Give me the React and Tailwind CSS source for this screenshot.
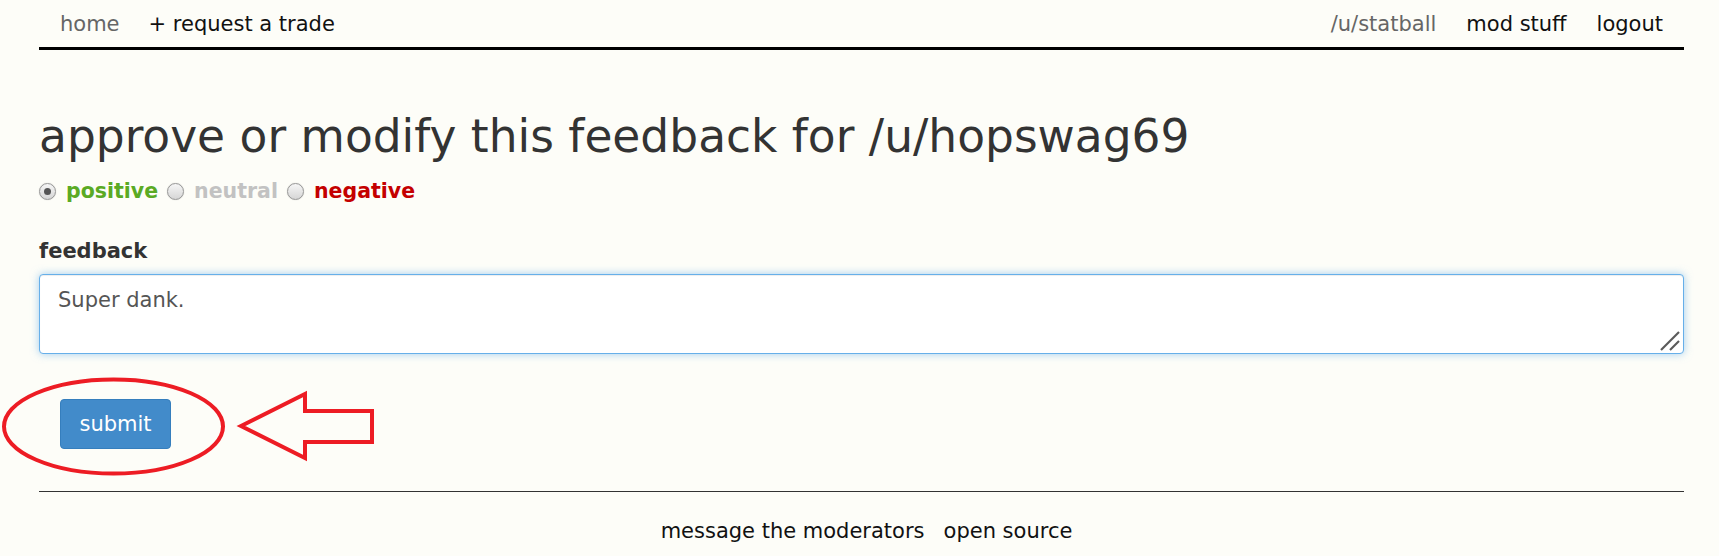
import React from "react";

function Radio({ checked }) {
  return (
    <span className="inline-flex items-center justify-center w-[17px] h-[17px] rounded-full border border-[#979797] bg-gradient-to-b from-[#f6f6f6] to-[#d6d6d6] shadow-[0_0_1px_rgba(0,0,0,0.25)] shrink-0">
      {checked && <span className="w-[7px] h-[7px] rounded-full bg-[#555]" />}
    </span>
  );
}

export default function App() {
  return (
    <div
      className="relative h-[556px] overflow-hidden bg-[#fdfdf8] text-[21px] leading-[30px] text-[#333]"
      style={{ fontFamily: '"DejaVu Sans", Verdana, sans-serif' }}
    >
      <div className="pl-[39px] pr-[35px]">
        <nav className="flex items-center justify-between h-[50px] border-b-[3px] border-black">
          <div className="flex items-center gap-[29px] pl-[21px]">
            <a className="text-[#666]">home</a>
            <a className="text-[#111]">+ request a trade</a>
          </div>
          <div className="flex items-center gap-[30px] pr-[21px]">
            <a className="text-[#666]">/u/statball</a>
            <a className="text-[#111]">mod stuff</a>
            <a className="text-[#111]">logout</a>
          </div>
        </nav>

        <h1 className="mt-[62px] text-[45.5px] leading-[50px] font-normal text-[#333]">
          approve or modify this feedback for /u/hopswag69
        </h1>

        <div className="mt-[14px] flex items-center font-bold text-[20.5px]">
          <Radio checked />
          <span className="ml-[10px] text-[#5aaa24]">positive</span>
          <span className="ml-[9px] flex"><Radio /></span>
          <span className="ml-[10px] text-[#c2c2c2]">neutral</span>
          <span className="ml-[9px] flex"><Radio /></span>
          <span className="ml-[10px] text-[#c40000]">negative</span>
        </div>

        <div className="mt-[30px] font-bold text-[#333]">feedback</div>

        <div className="relative mt-[8px]">
          <textarea
            defaultValue="Super dank."
            className="block w-full h-[80px] resize-none rounded-[4px] border border-[#66afe9] bg-white pl-[18px] pr-[12px] py-[10px] text-[21px] leading-[30px] text-[#555] outline-none shadow-[inset_0_1px_1px_rgba(0,0,0,0.075),0_0_8px_rgba(102,175,233,0.6)]"
            style={{ fontFamily: '"DejaVu Sans", Verdana, sans-serif' }}
          />
          <svg
            className="absolute right-[3px] bottom-[2px] pointer-events-none"
            width="22"
            height="22"
            viewBox="0 0 22 22"
          >
            <line x1="2" y1="20" x2="20" y2="2" stroke="#5a5a5a" strokeWidth="2.2" />
            <line x1="11" y1="20" x2="20" y2="11" stroke="#5a5a5a" strokeWidth="2.2" />
          </svg>
        </div>

        <button className="mt-[45px] ml-[21px] w-[111px] h-[50px] rounded-[4px] border border-[#357ebd] bg-[#428bca] text-white text-[21px]">
          submit
        </button>

        <footer className="mt-[42px] border-t border-[#333] pt-[24px] pl-[10px] flex justify-center gap-[19px] text-[#111]">
          <a>message the moderators</a>
          <a>open source</a>
        </footer>
      </div>

      <svg
        className="absolute left-0 top-0 pointer-events-none"
        width="1719"
        height="556"
        viewBox="0 0 1719 556"
      >
        <ellipse cx="113.5" cy="426.5" rx="109.5" ry="47" fill="none" stroke="#ed1c24" strokeWidth="4" />
        <polygon
          points="241,426 305,394 305,411 372,411 372,442 305,442 305,458"
          fill="none"
          stroke="#ed1c24"
          strokeWidth="4"
          strokeLinejoin="miter"
        />
      </svg>
    </div>
  );
}
